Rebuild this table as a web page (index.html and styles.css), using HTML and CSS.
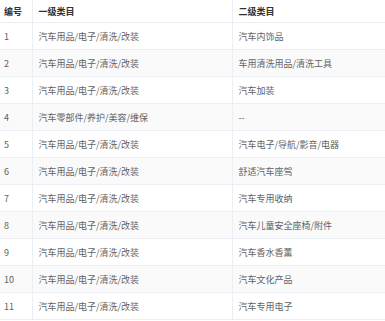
FILE: index.html
```html
<!DOCTYPE html>
<html lang="zh">
<head>
<meta charset="utf-8">
<link rel="stylesheet" href="styles.css">
</head>
<body>
<table class="grid">
  <colgroup><col class="c1"><col class="c2"><col class="c3"></colgroup>
  <thead>
    <tr><th>编号</th><th>一级类目</th><th>二级类目</th></tr>
  </thead>
  <tbody>
    <tr><td>1</td><td>汽车用品/电子/清洗/改装</td><td>汽车内饰品</td></tr>
    <tr><td>2</td><td>汽车用品/电子/清洗/改装</td><td>车用清洗用品/清洗工具</td></tr>
    <tr><td>3</td><td>汽车用品/电子/清洗/改装</td><td>汽车加装</td></tr>
    <tr><td>4</td><td>汽车零部件/养护/美容/维保</td><td>--</td></tr>
    <tr><td>5</td><td>汽车用品/电子/清洗/改装</td><td>汽车电子/导航/影音/电器</td></tr>
    <tr><td>6</td><td>汽车用品/电子/清洗/改装</td><td>舒适汽车座驾</td></tr>
    <tr><td>7</td><td>汽车用品/电子/清洗/改装</td><td>汽车专用收纳</td></tr>
    <tr><td>8</td><td>汽车用品/电子/清洗/改装</td><td>汽车儿童安全座椅/附件</td></tr>
    <tr><td>9</td><td>汽车用品/电子/清洗/改装</td><td>汽车香水香薰</td></tr>
    <tr><td>10</td><td>汽车用品/电子/清洗/改装</td><td>汽车文化产品</td></tr>
    <tr><td>11</td><td>汽车用品/电子/清洗/改装</td><td>汽车专用电子</td></tr>
  </tbody>
</table>
</body>
</html>
```
FILE: styles.css
```css
html, body {
  margin: 0;
  padding: 0;
  background: #fff;
}
.grid {
  width: 385px;
  border-collapse: collapse;
  table-layout: fixed;
  font-family: "Noto Sans CJK SC", "Noto Sans", sans-serif;
  font-size: 9px;
  color: #606266;
}
.c1 { width: 32px; }
.c2 { width: 200px; }
.c3 { width: 153px; }
.grid th, .grid td {
  text-align: left;
  padding: 0 0 0 5px;
  border-bottom: 1px solid #ebeef5;
  border-right: 1px solid #ebeef5;
  white-space: nowrap;
  overflow: hidden;
}
.grid th:first-child, .grid td:first-child { padding-left: 4px; }
.grid th:nth-child(2), .grid td:nth-child(2),
.grid th:nth-child(3), .grid td:nth-child(3) { padding-left: 6px; }
.grid th {
  height: 22px;
  font-weight: bold;
  color: #303133;
}
.grid td { height: 26px; }
.grid tbody tr:nth-child(even) td { background: #fafafa; }
```
